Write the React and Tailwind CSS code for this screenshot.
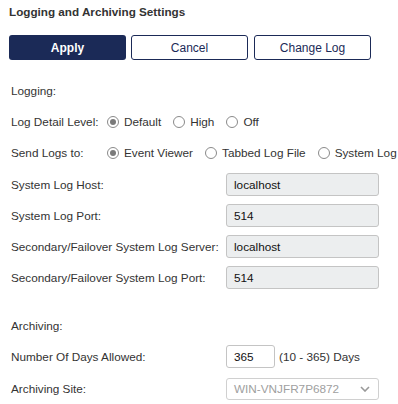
const font = { fontFamily: '"Liberation Sans", Arial, sans-serif' };

function Radio({ checked, label }) {
  return (
    <label className="flex items-center shrink-0 whitespace-nowrap mr-[12px]">
      <span className="w-[12px] h-[12px] shrink-0 rounded-full border border-[#8a8a8a] bg-white flex items-center justify-center">
        {checked && <span className="w-[6px] h-[6px] rounded-full bg-[#7a7a7a]" />}
      </span>
      <span className="ml-[5px]">{label}</span>
    </label>
  );
}

function Field({ label, value }) {
  return (
    <div className="flex items-center h-[31px] whitespace-nowrap">
      <div className="w-[215px] shrink-0">{label}</div>
      <div className="w-[153px] h-[23px] rounded-[3px] border border-[#c4c4c4] bg-[#eceeef] px-[7px] flex items-center text-[#111]">
        {value}
      </div>
    </div>
  );
}

export default function App() {
  return (
    <div className="w-[398px] h-[404px] overflow-hidden bg-white text-[11.75px] text-[#333]" style={font}>
      <div className="h-[24px] flex items-center pl-[9px] font-bold text-[11.7px] text-[#333]">
        Logging and Archiving Settings
      </div>
      <div className="flex gap-[5px] pl-[9px] mt-[11px]">
        <button className="w-[117px] h-[25px] rounded-[3px] bg-[#1b2a57] text-white font-bold text-[12px]">Apply</button>
        <button className="w-[117px] h-[25px] rounded-[3px] border border-[#1b2a57] bg-white text-[#1b2a57] text-[12px]">Cancel</button>
        <button className="w-[117px] h-[25px] rounded-[3px] border border-[#1b2a57] bg-white text-[#1b2a57] text-[12px] ml-[1px]">Change Log</button>
      </div>

      <div className="pl-[11px] mt-[15px]">
        <div className="h-[31px] flex items-center">Logging:</div>
        <div className="h-[31px] flex items-center whitespace-nowrap">
          <div className="w-[96px] shrink-0">Log Detail Level:</div>
          <Radio checked label="Default" />
          <Radio label="High" />
          <Radio label="Off" />
        </div>
        <div className="h-[31px] flex items-center whitespace-nowrap">
          <div className="w-[96px] shrink-0">Send Logs to:</div>
          <Radio checked label="Event Viewer" />
          <Radio label="Tabbed Log File" />
          <Radio label="System Log" />
        </div>
        <div className="mt-[1px]">
          <Field label="System Log Host:" value="localhost" />
          <Field label="System Log Port:" value="514" />
          <Field label="Secondary/Failover System Log Server:" value="localhost" />
          <Field label="Secondary/Failover System Log Port:" value="514" />
        </div>

        <div className="h-[31px] flex items-center mt-[17px]">Archiving:</div>
        <div className="h-[31px] flex items-center whitespace-nowrap">
          <div className="w-[215px] shrink-0">Number Of Days Allowed:</div>
          <div className="w-[49px] h-[23px] rounded-[3px] border border-[#c4c4c4] bg-white px-[7px] flex items-center text-[#111]">365</div>
          <span className="ml-[4px]">(10 - 365) Days</span>
        </div>
        <div className="h-[33px] flex items-center whitespace-nowrap">
          <div className="w-[215px] shrink-0">Archiving Site:</div>
          <div className="w-[153px] h-[22px] rounded-[3px] border border-[#d0d0d0] bg-white pl-[7px] pr-[8px] flex items-center justify-between text-[#a0a0a0]">
            <span>WIN-VNJFR7P6872</span>
            <svg width="10" height="6" viewBox="0 0 10 6" fill="none">
              <path d="M1 1l4 4 4-4" stroke="#999" strokeWidth="1.6" />
            </svg>
          </div>
        </div>
      </div>
    </div>
  );
}
